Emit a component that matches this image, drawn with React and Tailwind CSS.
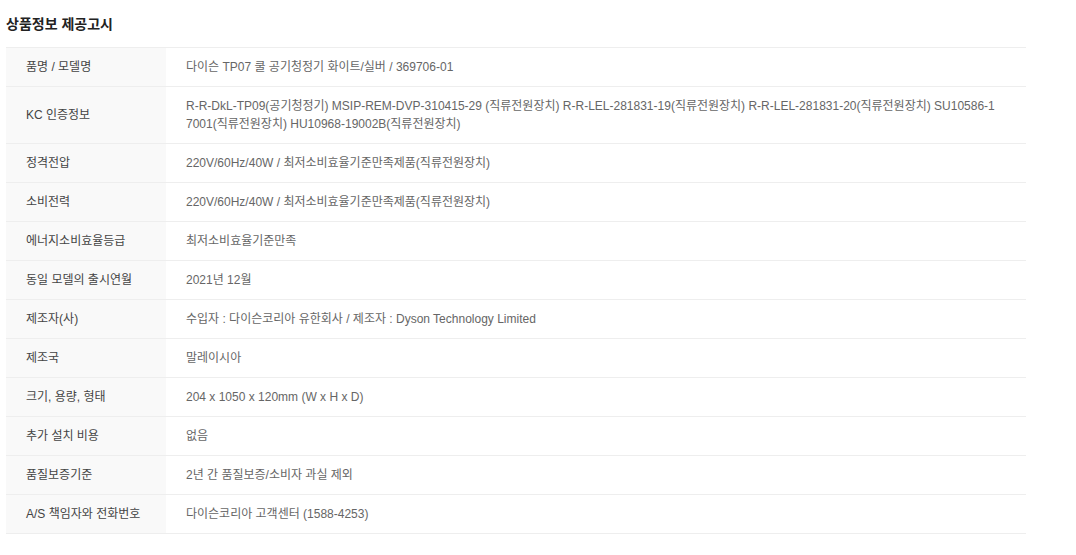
const rows = [
  ['품명 / 모델명', '다이슨 TP07 쿨 공기청정기 화이트/실버 / 369706-01'],
  ['KC 인증정보', 'R-R-DkL-TP09(공기청정기) MSIP-REM-DVP-310415-29 (직류전원장치) R-R-LEL-281831-19(직류전원장치) R-R-LEL-281831-20(직류전원장치) SU10586-17001(직류전원장치) HU10968-19002B(직류전원장치)'],
  ['정격전압', '220V/60Hz/40W / 최저소비효율기준만족제품(직류전원장치)'],
  ['소비전력', '220V/60Hz/40W / 최저소비효율기준만족제품(직류전원장치)'],
  ['에너지소비효율등급', '최저소비효율기준만족'],
  ['동일 모델의 출시연월', '2021년 12월'],
  ['제조자(사)', '수입자 : 다이슨코리아 유한회사 / 제조자 : Dyson Technology Limited'],
  ['제조국', '말레이시아'],
  ['크기, 용량, 형태', '204 x 1050 x 120mm (W x H x D)'],
  ['추가 설치 비용', '없음'],
  ['품질보증기준', '2년 간 품질보증/소비자 과실 제외'],
  ['A/S 책임자와 전화번호', '다이슨코리아 고객센터 (1588-4253)'],
];

export default function App() {
  return (
    <div className="min-h-screen bg-white pl-[6px] pt-[14px] font-['Liberation_Sans','Noto_Sans_CJK_KR',sans-serif]">
      <h2 className="text-[14px] leading-[20px] font-bold text-[#222] mb-[13px]">상품정보 제공고시</h2>
      <table className="w-[1020px] border-collapse border-t border-[#eeeeee] text-[12px] leading-[18px]">
        <tbody>
          {rows.map(([label, value]) => (
            <tr key={label} className="border-b border-[#eeeeee]">
              <th className="w-[160px] bg-[#f9f9f9] px-[20px] py-[10px] text-left font-normal text-[#444] align-middle">
                {label}
              </th>
              <td className="pl-[20px] pr-[28px] py-[10px] text-[#666] break-all align-middle">{value}</td>
            </tr>
          ))}
        </tbody>
      </table>
    </div>
  );
}
